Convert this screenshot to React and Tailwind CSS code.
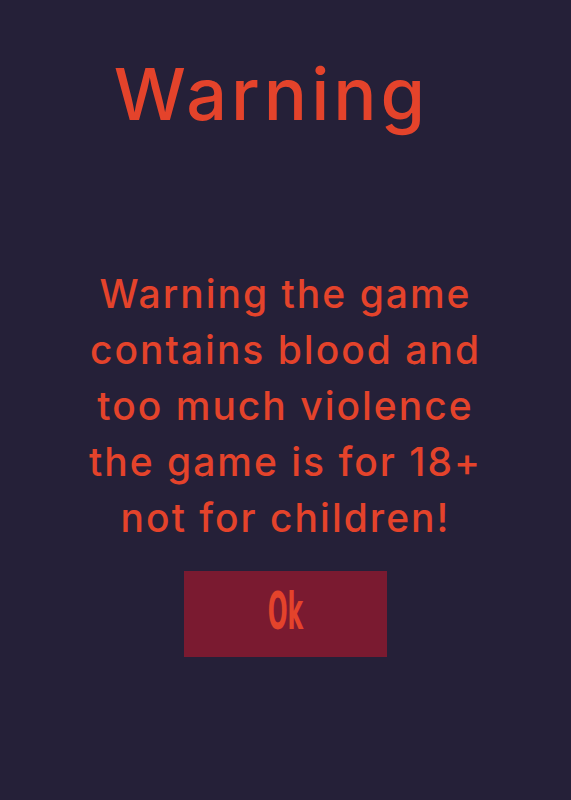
import React from 'react';

const lines = [
  'Warning the game',
  'contains blood and',
  'too much violence',
  'the game is for 18+',
  'not for children!',
];

const App = () => {
  return (
    <div className="w-[571px] h-[800px] bg-[#252038] flex flex-col items-center text-[#e4432b]" style={{ fontFamily: 'Inter, "Noto Sans", sans-serif' }}>
      <h1 className="mt-[50px] mr-[28px] text-[72px] leading-[88px] font-medium tracking-[4px]">Warning</h1>
      <p className="mt-[128px] text-center text-[39px] leading-[56px] font-medium tracking-[2px]">
        {lines.map((l) => (
          <span key={l} className="block">{l}</span>
        ))}
      </p>
      <button className="mt-[25px] w-[203px] h-[86px] bg-[#7a1a30] flex items-center justify-center">
        <span className="-mt-[6px] text-[52px] leading-none font-bold scale-x-[0.5] text-[#e4432b]" style={{ fontFamily: '"DejaVu Sans Condensed", "Liberation Sans", sans-serif' }}>Ok</span>
      </button>
    </div>
  );
};

export default App;
